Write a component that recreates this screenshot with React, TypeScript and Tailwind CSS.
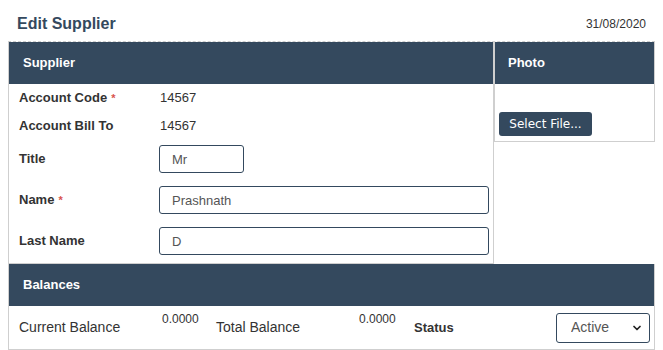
import { ChevronDown } from "lucide-react";

const Req = () => <span className="ml-[4px] text-[11px] text-[#d9534f]">*</span>;

const App = () => {
  return (
    <div className="w-[663px] h-[350px] overflow-hidden bg-white text-[#333] [font-family:'Liberation_Sans',Arial,sans-serif]">
      <div className="h-[41px] flex items-center justify-between pl-[17px] pr-[17px] pt-[6px]">
        <h1 className="text-[16px] font-bold text-[#34495e]">Edit Supplier</h1>
        <span className="text-[12px] text-[#333]">31/08/2020</span>
      </div>

      <div className="mx-[8px] border-t border-dashed border-[#cfcfcf]">
        <div className="flex items-start">
          {/* supplier */}
          <div className="w-[486px] border-x border-b border-[#cfcfcf]">
            <div className="h-[42px] bg-[#34495e] px-[14px] flex items-center text-white text-[13px] font-bold">
              Supplier
            </div>
            <div className="pl-[10px] pr-[4px] pb-[8px] text-[13px]">
              <div className="h-[28px] flex items-center">
                <div className="w-[140px] font-bold">Account Code<Req /></div>
                <div className="pl-[1px]">14567</div>
              </div>
              <div className="h-[27px] flex items-center">
                <div className="w-[140px] font-bold">Account Bill To</div>
                <div className="pl-[1px]">14567</div>
              </div>
              <div className="mt-[6px] flex flex-col gap-[13px]">
                <div className="flex items-center">
                  <div className="w-[140px] font-bold">Title</div>
                  <input
                    defaultValue="Mr"
                    className="w-[85px] h-[28px] border border-[#34495e] rounded-[3px] pl-[12px] text-[13px] text-[#555] outline-none"
                  />
                </div>
                <div className="flex items-center">
                  <div className="w-[140px] font-bold">Name<Req /></div>
                  <input
                    defaultValue="Prashnath"
                    className="flex-1 h-[28px] border border-[#34495e] rounded-[3px] pl-[12px] text-[13px] text-[#555] outline-none"
                  />
                </div>
                <div className="flex items-center">
                  <div className="w-[140px] font-bold">Last Name</div>
                  <input
                    defaultValue="D"
                    className="flex-1 h-[28px] border border-[#34495e] rounded-[3px] pl-[12px] text-[13px] text-[#555] outline-none"
                  />
                </div>
              </div>
            </div>
          </div>

          {/* photo */}
          <div className="w-[161px] border-x border-b border-[#cfcfcf]">
            <div className="h-[42px] bg-[#34495e] px-[13px] flex items-center text-white text-[13px] font-bold">
              Photo
            </div>
            <div className="h-[57px] pl-[4px] pt-[27px]">
              <button className="h-[24px] w-[93px] bg-[#34495e] rounded-[3px] text-white text-[12px] [font-family:'DejaVu_Sans',sans-serif] leading-none">
                Select File...
              </button>
            </div>
          </div>
        </div>

        {/* balances */}
        <div className="border-x border-b border-[#cfcfcf]">
          <div className="h-[42px] bg-[#34495e] px-[14px] flex items-center text-white text-[13px] font-bold">
            Balances
          </div>
          <div className="h-[43px] flex items-center pl-[10px] pr-[4px]">
            <div className="w-[143px] text-[14px]">Current Balance</div>
            <div className="w-[54px] self-start mt-[6px] text-[12px] leading-[14px]">0.0000</div>
            <div className="w-[143px] text-[14px]">Total Balance</div>
            <div className="w-[55px] self-start mt-[6px] text-[12px] leading-[14px]">0.0000</div>
            <div className="text-[13px] font-bold">Status</div>
            <div className="ml-auto relative w-[94px] h-[30px]">
              <select
                defaultValue="Active"
                className="appearance-none w-full h-full border border-[#34495e] rounded-[3px] pl-[14px] text-[14px] text-[#555] bg-white outline-none"
              >
                <option>Active</option>
                <option>Inactive</option>
              </select>
              <ChevronDown
                size={12}
                strokeWidth={3.5}
                className="absolute right-[7px] top-[9px] text-[#222] pointer-events-none"
              />
            </div>
          </div>
        </div>
      </div>
    </div>
  );
};

export default App;
